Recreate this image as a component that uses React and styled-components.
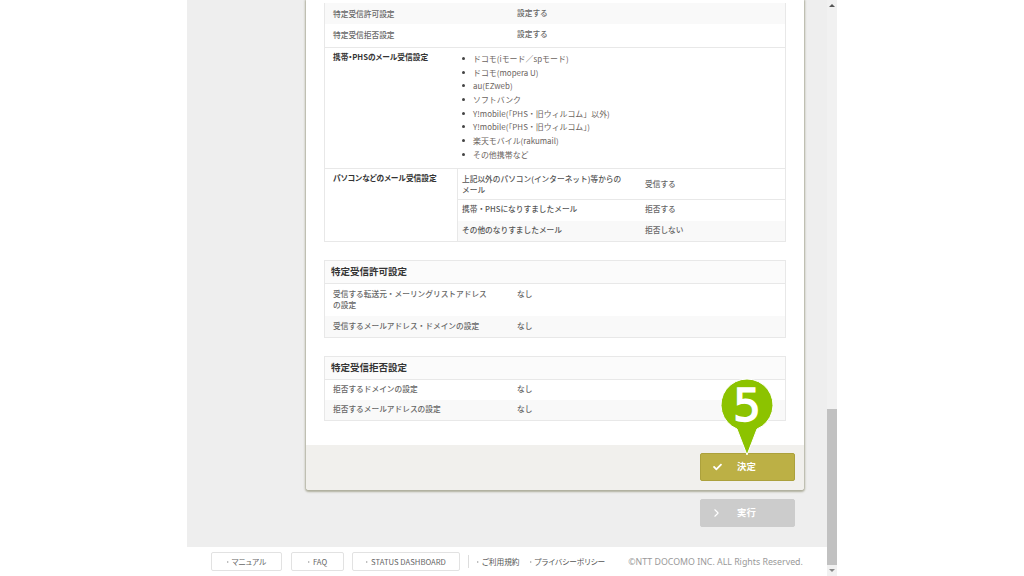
import React from "react"
import styled, { createGlobalStyle } from "styled-components"
import { FaCheck } from "react-icons/fa"
import { FiChevronRight } from "react-icons/fi"

const Global = createGlobalStyle`
  html, body { margin: 0; padding: 0; background: #fff; overflow: hidden; }
  body { font-family: "Noto Sans CJK JP", "Noto Sans", sans-serif; color: #555; }
`
const Viewport = styled.div`
  width: 1024px;
  height: 576px;
  display: flex;
  justify-content: flex-start;
  padding-left: 187px;
  box-sizing: border-box;
  overflow: hidden;
`
const Page = styled.div`
  width: 640px;
  height: 576px;
  display: flex;
  flex-direction: column;
`
const Main = styled.main`
  height: 547px;
  background: #eeeeee;
  padding-left: 119px;
  padding-right: 23px;
  box-sizing: border-box;
  display: flex;
  flex-direction: column;
`
const Card = styled.section`
  width: 498px;
  height: 490px;
  flex: none;
  background: #fff;
  box-shadow: 0 1px 2px 1px #aeae9c;
  border-radius: 0 0 3px 3px;
  display: flex;
  flex-direction: column;
`
const CardBody = styled.div`
  height: 445px;
  flex: none;
  padding: 3px 18px 0;
  box-sizing: border-box;
  display: flex;
  flex-direction: column;
  gap: 18px;
`
const CardFooter = styled.div`
  height: 45px;
  flex: none;
  background: #f1f0ed;
  display: flex;
  justify-content: flex-end;
  align-items: flex-start;
  padding: 8px 9px 0 0;
  box-sizing: border-box;
  border-radius: 0 0 3px 3px;
`
const Table = styled.div`
  border: 1px solid #e8e8e8;
  border-top: ${(p) => (p.$open ? "none" : "1px solid #e8e8e8")};
  display: flex;
  flex-direction: column;
`
const SectionTitle = styled.h3`
  margin: 0;
  height: 23px;
  line-height: 21px;
  padding-left: 6px;
  font-size: 9.5px;
  font-weight: 700;
  color: #333;
  background: #fbfbfb;
  border-bottom: 1px solid #e8e8e8;
  box-sizing: border-box;
`
const Row = styled.div`
  display: flex;
  height: ${(p) => p.$h}px;
  background: ${(p) => (p.$striped ? "#f9f9f9" : "#fff")};
  border-bottom: ${(p) => (p.$line ? "1px solid #e8e8e8" : "none")};
  box-sizing: border-box;
`
const Label = styled.div`
  width: ${(p) => p.$w || 192}px;
  flex: none;
  padding: ${(p) => p.$pt ?? 5}px 26px 0 8px;
  box-sizing: border-box;
  font-size: 7.7px;
  line-height: 11px;
  font-weight: ${(p) => (p.$bold ? 700 : 500)};
  color: ${(p) => (p.$bold ? "#333" : "#666")};
  font-feature-settings: ${(p) => (p.$bold ? '"palt"' : "normal")};
`
const Value = styled.div`
  padding-top: ${(p) => p.$pt ?? 4}px;
  font-size: 7.7px;
  line-height: 11px;
  font-weight: 500;
  color: #666;
`
const GroupLabel = styled(Label)`
  padding-right: 4px;
  border-right: 1px solid #e8e8e8;
`
const BulletList = styled.ul`
  margin: 0;
  padding: 4px 0 0 15px;
  list-style: none;
`
const BulletItem = styled.li`
  height: 13.7px;
  line-height: 13.7px;
  font-size: 7.95px;
  color: #6b6360;
  position: relative;
  &::before {
    content: "";
    position: absolute;
    left: -11px;
    top: 5px;
    width: 3px;
    height: 3px;
    border-radius: 50%;
    background: #444;
  }
`
const SubRows = styled.div`
  flex: 1;
  display: flex;
  flex-direction: column;
`
const SubLabel = styled.div`
  width: 187px;
  flex: none;
  padding: ${(p) => p.$pt ?? 4}px 20px 0 4px;
  box-sizing: border-box;
  font-size: 7.7px;
  line-height: 11px;
  font-weight: 500;
  color: #555;
`
const ActionButton = styled.button`
  position: relative;
  width: 95px;
  height: 28px;
  padding: 0 0 2px 36px;
  border: 1px solid ${(p) => (p.$disabled ? "#cccccc" : "#aca13c")};
  border-radius: 2px;
  background: ${(p) => (p.$disabled ? "#cccccc" : "#bcb045")};
  color: #fff;
  font-family: inherit;
  font-size: 9.4px;
  font-weight: 700;
  text-align: left;
  display: flex;
  align-items: center;
  box-sizing: border-box;
`
const ButtonIcon = styled.span`
  position: absolute;
  left: ${(p) => p.$left}px;
  top: 50%;
  transform: translateY(-50%);
  display: flex;
  font-size: ${(p) => p.$size}px;
`
const ButtonRow = styled.div`
  display: flex;
  justify-content: flex-end;
  padding: 9px 9px 0 0;
`
const Marker = styled.div`
  position: absolute;
  left: 19px;
  bottom: 24px;
  width: 54px;
  height: 78px;
`
const MarkerNumber = styled.span`
  position: absolute;
  left: 0;
  right: 0;
  top: 0;
  text-align: center;
  font-family: "DejaVu Sans", sans-serif;
  font-size: 44px;
  line-height: 55px;
  font-weight: 400;
  -webkit-text-stroke: 1.4px #fff;
  color: #fff;
`
const Footer = styled.footer`
  height: 29px;
  background: #fff;
  display: flex;
  align-items: flex-start;
  padding: 5px 0 0 24px;
  box-sizing: border-box;
`
const FooterButton = styled.a`
  width: ${(p) => p.$w}px;
  height: 19px;
  margin-right: ${(p) => p.$gap}px;
  border: 1px solid #e2e2e2;
  border-radius: 2px;
  box-sizing: border-box;
  font-size: 7.7px;
  color: #666;
  display: flex;
  align-items: center;
  justify-content: center;
  gap: 3px;
  font-feature-settings: "palt";
`
const Arrow = styled.i`
  width: 0;
  height: 0;
  border-left: 2px solid #aaa;
  border-top: 1.5px solid transparent;
  border-bottom: 1.5px solid transparent;
`
const Divider = styled.div`
  width: 1px;
  height: 13px;
  margin: 3px 8px 0 0;
  background: #ddd;
`
const FooterLink = styled.a`
  height: 19px;
  margin-right: ${(p) => p.$gap}px;
  font-size: 7.7px;
  color: #555;
  display: flex;
  align-items: center;
  gap: 3px;
  white-space: nowrap;
  font-feature-settings: "palt";
`
const Copyright = styled.small`
  height: 19px;
  font-family: "Noto Sans", sans-serif;
  font-size: 8.8px;
  color: #999;
  display: flex;
  align-items: center;
  white-space: nowrap;
`
const Scrollbar = styled.div`
  width: 10px;
  height: 576px;
  background: #f1f1f1;
  display: flex;
  flex-direction: column;
  align-items: center;
`
const ScrollArrow = styled.div`
  height: 11px;
  display: flex;
  align-items: center;
  width: 0;
  &::before {
    content: "";
    border-left: 3px solid transparent;
    border-right: 3px solid transparent;
    border-bottom: ${(p) => (p.$down ? "none" : "3px solid #555")};
    border-top: ${(p) => (p.$down ? "3px solid #888" : "none")};
    transform: translateX(-3px);
  }
`
const ScrollTrack = styled.div`
  flex: 1;
  width: 100%;
  padding-top: 398px;
  box-sizing: border-box;
  display: flex;
`
const ScrollThumb = styled.div`
  flex: 1;
  background: #c1c1c1;
`

const mailKinds = [
  "ドコモ(iモード／spモード)",
  "ドコモ(mopera U)",
  "au(EZweb)",
  "ソフトバンク",
  "Y!mobile(「PHS・旧ウィルコム」以外)",
  "Y!mobile(「PHS・旧ウィルコム」)",
  "楽天モバイル(rakumail)",
  "その他携帯など",
]

const App = () => {
  return (
    <Viewport>
      <Global />
      <Page>
        <Main>
          <Card>
            <CardBody>
              <Table $open>
                <Row $h={21} $striped>
                  <Label>特定受信許可設定</Label>
                  <Value>設定する</Value>
                </Row>
                <Row $h={24} $line>
                  <Label>特定受信拒否設定</Label>
                  <Value>設定する</Value>
                </Row>
                <Row $h={121} $line>
                  <Label $bold $w={133} $pt={3}>携帯・PHSのメール受信設定</Label>
                  <BulletList>
                    {mailKinds.map((k) => (
                      <BulletItem key={k}>{k}</BulletItem>
                    ))}
                  </BulletList>
                </Row>
                <Row $h={72}>
                  <GroupLabel $bold $w={133} $pt={3}>パソコンなどのメール受信設定</GroupLabel>
                  <SubRows>
                    <Row $h={31} $line>
                      <SubLabel>上記以外のパソコン(インターネット)等からのメール</SubLabel>
                      <Value $pt={9}>受信する</Value>
                    </Row>
                    <Row $h={21}>
                      <SubLabel $pt={3}>携帯・PHSになりすましたメール</SubLabel>
                      <Value $pt={3}>拒否する</Value>
                    </Row>
                    <Row $h={20} $striped>
                      <SubLabel $pt={3}>その他のなりすましたメール</SubLabel>
                      <Value $pt={3}>拒否しない</Value>
                    </Row>
                  </SubRows>
                </Row>
              </Table>
              <Table>
                <SectionTitle>特定受信許可設定</SectionTitle>
                <Row $h={32}>
                  <Label $pt={4}>受信する転送元・メーリングリストアドレスの設定</Label>
                  <Value $pt={4}>なし</Value>
                </Row>
                <Row $h={21} $striped>
                  <Label $pt={4}>受信するメールアドレス・ドメインの設定</Label>
                  <Value $pt={4}>なし</Value>
                </Row>
              </Table>
              <Table>
                <SectionTitle>特定受信拒否設定</SectionTitle>
                <Row $h={20}>
                  <Label $pt={3}>拒否するドメインの設定</Label>
                  <Value $pt={3}>なし</Value>
                </Row>
                <Row $h={20} $striped>
                  <Label $pt={3}>拒否するメールアドレスの設定</Label>
                  <Value $pt={3}>なし</Value>
                </Row>
              </Table>
            </CardBody>
            <CardFooter>
              <ActionButton>
                <ButtonIcon $left={12} $size={9}><FaCheck /></ButtonIcon>
                決定
                <Marker>
                  <svg width="54" height="78" viewBox="0 0 54 78">
                    <path
                      d="M27 77 L17 51 A26 26 0 1 1 37 51 Z"
                      fill="#8cc300"
                      stroke="#fff"
                      strokeWidth="1"
                    />
                  </svg>
                  <MarkerNumber>5</MarkerNumber>
                </Marker>
              </ActionButton>
            </CardFooter>
          </Card>
          <ButtonRow>
            <ActionButton $disabled>
              <ButtonIcon $left={9} $size={13}><FiChevronRight /></ButtonIcon>
              実行
            </ActionButton>
          </ButtonRow>
        </Main>
        <Footer>
          <FooterButton $w={71} $gap={9}><Arrow />マニュアル</FooterButton>
          <FooterButton $w={53} $gap={8}><Arrow />FAQ</FooterButton>
          <FooterButton $w={108} $gap={8}><Arrow />STATUS DASHBOARD</FooterButton>
          <Divider />
          <FooterLink $gap={10}><Arrow />ご利用規約</FooterLink>
          <FooterLink $gap={23}><Arrow />プライバシーポリシー</FooterLink>
          <Copyright>©NTT DOCOMO INC. ALL Rights Reserved.</Copyright>
        </Footer>
      </Page>
      <Scrollbar>
        <ScrollArrow />
        <ScrollTrack><ScrollThumb /></ScrollTrack>
        <ScrollArrow $down />
      </Scrollbar>
    </Viewport>
  )
}

export default App
